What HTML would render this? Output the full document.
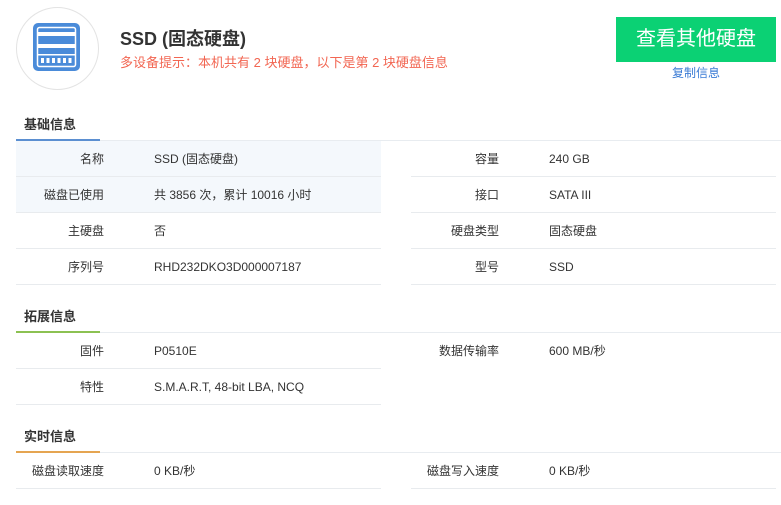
<!DOCTYPE html>
<html><head><meta charset="utf-8"><style>
*{margin:0;padding:0;box-sizing:border-box}
body{width:781px;height:505px;background:#fff;font-family:"Liberation Sans","Noto Sans CJK SC",sans-serif;color:#333;position:relative;overflow:hidden;font-size:12px}
.abs{position:absolute}
.circle{left:16px;top:7px;width:83px;height:83px;border:1px solid #e3e3e3;border-radius:50%}
.title{left:120px;top:25px;font-size:18px;font-weight:bold;color:#333}
.tip{left:120px;top:52px;font-size:13px;color:#f26652}
.btn{left:616px;top:17px;width:160px;height:45px;background:#0bd174;color:#fff;font-size:20px;text-align:center;line-height:45px}
.copy{left:672px;top:64px;font-size:12px;color:#3a7bd5}
.sec{left:24px;font-size:13px;font-weight:bold;color:#333}
.gl{left:16px;width:765px;height:1px;background:#e8ecf0}
.ul{left:16px;width:84px;height:2px}
.row{height:36px;line-height:37px;border-bottom:1px solid #e8ebee;width:365px}
.lab{position:absolute;right:277px;text-align:right;white-space:nowrap}
.val{position:absolute;left:138px;white-space:nowrap}
</style></head><body>
<div class="abs circle"></div>
<svg class="abs" style="left:33px;top:23px" width="47" height="48" viewBox="0 0 47 48">
<rect x="0" y="0" width="47" height="48" rx="5" fill="#4a8bd9"/>
<rect x="4.5" y="4.5" width="38" height="39" rx="2" fill="none" stroke="#fff" stroke-width="1.5"/>
<rect x="5" y="9" width="37" height="4" fill="#fff"/>
<rect x="5" y="21" width="37" height="4" fill="#fff"/>
<rect x="4" y="31" width="39" height="1.5" fill="#fff"/>
<g fill="#fff"><rect x="8" y="35" width="3" height="5"/><rect x="13.5" y="35" width="3" height="5"/><rect x="19" y="35" width="3" height="5"/><rect x="24.5" y="35" width="3" height="5"/><rect x="30" y="35" width="3" height="5"/><rect x="35.5" y="35" width="3" height="5"/></g>
</svg>
<div class="abs title">SSD (固态硬盘)</div>
<div class="abs tip">多设备提示：本机共有 2 块硬盘，以下是第 2 块硬盘信息</div>
<div class="abs btn">查看其他硬盘</div>
<div class="abs copy">复制信息</div>

<div class="abs sec" style="top:114px">基础信息</div>
<div class="abs gl" style="top:140px"></div>
<div class="abs ul" style="top:139px;background:#5b8fd1"></div>
<div class="abs" style="left:16px;top:141px">
<div class="row" style="position:relative;background:#f4f8fc"><span class="lab">名称</span><span class="val">SSD (固态硬盘)</span></div>
<div class="row" style="position:relative;background:#f4f8fc"><span class="lab">磁盘已使用</span><span class="val">共 3856 次，累计 10016 小时</span></div>
<div class="row" style="position:relative"><span class="lab">主硬盘</span><span class="val">否</span></div>
<div class="row" style="position:relative"><span class="lab">序列号</span><span class="val">RHD232DKO3D000007187</span></div>
</div>
<div class="abs" style="left:411px;top:141px">
<div class="row" style="position:relative"><span class="lab">容量</span><span class="val">240 GB</span></div>
<div class="row" style="position:relative"><span class="lab">接口</span><span class="val">SATA III</span></div>
<div class="row" style="position:relative"><span class="lab">硬盘类型</span><span class="val">固态硬盘</span></div>
<div class="row" style="position:relative"><span class="lab">型号</span><span class="val">SSD</span></div>
</div>

<div class="abs sec" style="top:306px">拓展信息</div>
<div class="abs gl" style="top:332px"></div>
<div class="abs ul" style="top:331px;background:#8cc152"></div>
<div class="abs" style="left:16px;top:333px">
<div class="row" style="position:relative"><span class="lab">固件</span><span class="val">P0510E</span></div>
<div class="row" style="position:relative"><span class="lab">特性</span><span class="val">S.M.A.R.T, 48-bit LBA, NCQ</span></div>
</div>
<div class="abs" style="left:411px;top:333px">
<div class="row" style="position:relative;border-bottom-color:transparent"><span class="lab">数据传输率</span><span class="val">600 MB/秒</span></div>
</div>

<div class="abs sec" style="top:426px">实时信息</div>
<div class="abs gl" style="top:452px"></div>
<div class="abs ul" style="top:451px;background:#e5a551"></div>
<div class="abs" style="left:16px;top:453px">
<div class="row" style="position:relative"><span class="lab">磁盘读取速度</span><span class="val">0 KB/秒</span></div>
</div>
<div class="abs" style="left:411px;top:453px">
<div class="row" style="position:relative"><span class="lab">磁盘写入速度</span><span class="val">0 KB/秒</span></div>
</div>
</body></html>
